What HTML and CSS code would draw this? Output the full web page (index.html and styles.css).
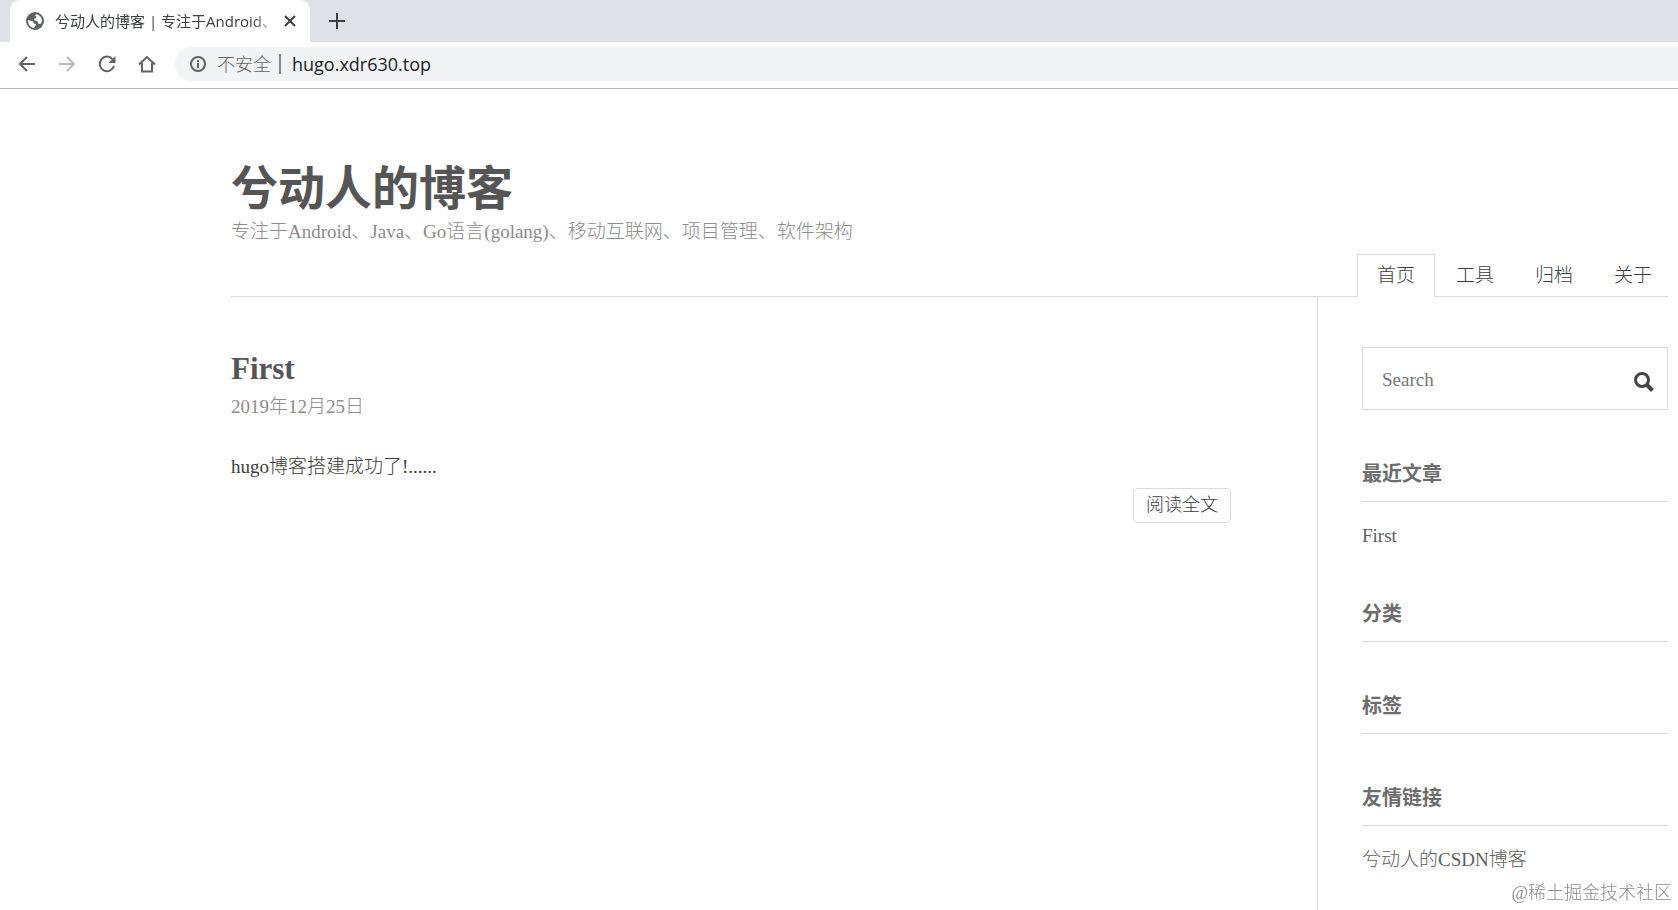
FILE: index.html
```html
<!DOCTYPE html>
<html lang="zh-CN">
<head>
    <meta charset="UTF-8">
    <meta name="viewport" content="width=device-width, initial-scale=1.0">
    <title>兮动人的博客 | 专注于Android、Java、Go语言</title>
    <link rel="stylesheet" href="styles.css">
</head>
<body>
    <div class="browser">
        <div class="tab-strip">
            <div class="tab">
                <svg class="globe" viewBox="0 0 18 18" width="18" height="18">
                    <circle cx="9" cy="9" r="9" fill="#5f6368"/>
                    <path d="M2 8l5 1.500 1 2 2 .5-.5 2L8 16C4.500 15.500 2 12.500 2 9zM10.500 2.200C14 3 16 5.500 16 9l-1.500 3-2.500-.5-.5-2.500-3-.5-.5-1.500 2-1 .5-1.500-1.500-1z" fill="#fff"/>
                </svg>
                <span class="tab-title">兮动人的博客 | 专注于Android、</span>
                <button class="tab-close" type="button" aria-label="关闭">
                    <svg viewBox="0 0 12 12" width="12" height="12"><path d="M1 1l10 10M11 1L1 11" stroke="#3c4043" stroke-width="2"/></svg>
                </button>
            </div>
            <button class="new-tab" type="button" aria-label="新标签页">
                <svg viewBox="0 0 16 16" width="16" height="16"><path d="M8 0v16M0 8h16" stroke="#3c4043" stroke-width="2"/></svg>
            </button>
        </div>
        <div class="toolbar">
            <button type="button" aria-label="后退">
                <svg viewBox="0 0 18 18" width="18" height="18" fill="none" stroke="#5f6368" stroke-width="2"><path d="M17 9H2M9 2L2 9l7 7"/></svg>
            </button>
            <button type="button" aria-label="前进" disabled>
                <svg viewBox="0 0 18 18" width="18" height="18" fill="none" stroke="#babcbe" stroke-width="2"><path d="M1 9h15M9 2l7 7-7 7"/></svg>
            </button>
            <button type="button" aria-label="刷新">
                <svg viewBox="0 0 18 18" width="18" height="18"><path d="M14.500 4A7.300 7.300 0 1 0 16 11" fill="none" stroke="#5f6368" stroke-width="2"/><path d="M17.500 1v7h-7z" fill="#5f6368"/></svg>
            </button>
            <button type="button" aria-label="主页">
                <svg viewBox="0 0 18 18" width="18" height="18" fill="none" stroke="#5f6368" stroke-width="2"><path d="M1 9.500L9 2l8 7.500M4 8v8.500h10V8"/></svg>
            </button>
            <div class="omnibox">
                <svg viewBox="0 0 18 18" width="18" height="18"><circle cx="9" cy="9" r="7" fill="none" stroke="#5f6368" stroke-width="2"/><path d="M9 8v5M9 5v2" stroke="#5f6368" stroke-width="2"/></svg>
                <label class="insecure" for="address">不安全</label>
                <input class="address" id="address" type="text" value="hugo.xdr630.top">
            </div>
        </div>
    </div>

    <div class="page">
        <header class="header">
            <h1 class="site-title">兮动人的博客</h1>
            <p class="description">专注于Android、Java、Go语言(golang)、移动互联网、项目管理、软件架构</p>
            <nav class="nav">
                <a class="current" href="#">首页</a>
                <a href="#">工具</a>
                <a href="#">归档</a>
                <a href="#">关于</a>
            </nav>
        </header>
        <div class="columns">
            <main class="main">
                <article class="post">
                    <h2 class="post-title"><a href="#">First</a></h2>
                    <p class="post-date">2019年12月25日</p>
                    <p class="post-content">hugo博客搭建成功了!......</p>
                    <p class="readmore"><a href="#">阅读全文</a></p>
                </article>
            </main>
            <aside class="sidebar">
                <form class="search">
                    <input type="text" name="q" aria-label="Search" placeholder="Search">
                    <button type="submit" aria-label="Search">
                        <svg viewBox="0 0 20 20" width="20" height="20" fill="none" stroke="#444"><circle cx="8" cy="8" r="6.500" stroke-width="3"/><path d="M12.500 12.500l6 6" stroke-width="4"/></svg>
                    </button>
                </form>
                <section class="widget">
                    <h3>最近文章</h3>
                    <ul>
                        <li><a href="#">First</a></li>
                    </ul>
                </section>
                <section class="widget">
                    <h3>分类</h3>
                </section>
                <section class="widget">
                    <h3>标签</h3>
                </section>
                <section class="widget">
                    <h3>友情链接</h3>
                    <ul>
                        <li><a href="#">兮动人的CSDN博客</a></li>
                    </ul>
                </section>
            </aside>
        </div>
    </div>
    <div class="watermark">@稀土掘金技术社区</div>
</body>
</html>
```
FILE: styles.css
```css
* {
    box-sizing: border-box;
}
body {
    margin: 0;
    min-height: 100vh;
    display: flex;
    flex-direction: column;
    background-color: #fff;
    color: #3c3c3c;
    font-family: Georgia, "Liberation Serif", "Noto Sans CJK SC", serif;
    font-size: 19px;
    font-weight: 300;
    line-height: 28px;
}
h1, h2, h3, p, ul {
    margin: 0;
    padding: 0;
}
ul {
    list-style: none;
}
a {
    color: inherit;
    text-decoration: none;
}
button {
    padding: 0;
    border: none;
    background: none;
    cursor: pointer;
}
svg {
    display: block;
}

/* browser bar */
.browser {
    font-family: "Open Sans", "Noto Sans CJK SC", sans-serif;
    font-weight: 400;
    border-bottom: 1px solid #b4b4b4;
}
.tab-strip {
    display: flex;
    align-items: center;
    height: 42px;
    padding-left: 10px;
    background-color: #dee1e6;
}
.tab {
    display: flex;
    align-items: center;
    width: 300px;
    height: 42px;
    padding: 0 14px 0 16px;
    border-radius: 10px 10px 0 0;
    background-color: #fff;
}
.tab-title {
    flex: 1;
    margin: 0 4px 0 11px;
    white-space: nowrap;
    font-size: 15px;
    color: #3c4043;
    -webkit-mask-image: linear-gradient(to right, #000 88%, transparent);
    mask-image: linear-gradient(to right, #000 88%, transparent);
}
.new-tab {
    margin-left: 19px;
}
.toolbar {
    display: flex;
    align-items: center;
    gap: 22px;
    height: 46px;
    padding: 0 0 2px 18px;
}
.omnibox {
    flex: 1;
    display: flex;
    align-items: center;
    height: 34px;
    margin-left: -3px;
    padding-left: 14px;
    border-radius: 17px 0 0 17px;
    background-color: #f1f3f4;
}
.insecure {
    margin-left: 10px;
    padding-right: 8px;
    border-right: 2px solid #85888b;
    font-size: 18px;
    font-weight: 300;
    line-height: 20px;
    color: #5f6368;
}
.address {
    flex: 1;
    padding: 0 11px;
    border: none;
    background: none;
    color: #202124;
    font-family: inherit;
    font-size: 18px;
}

/* blog */
.page {
    flex: 1;
    display: flex;
    flex-direction: column;
    padding: 72px 10px 0 231px;
}
.header {
    border-bottom: 1px solid #d8dadb;
}
.site-title {
    font-size: 47px;
    line-height: 57px;
    color: #555;
}
.description {
    color: #8c8c8c;
}
.nav {
    display: flex;
    justify-content: flex-end;
    gap: 1px;
    margin: 8px -4px -1px 0;
}
.nav a {
    padding: 7px 19px;
    border: 1px solid transparent;
    border-bottom: none;
}
.nav .current {
    border-color: #d8dadb;
    background-color: #fff;
}
.columns {
    flex: 1;
    display: flex;
}
.main {
    flex: 1;
    padding: 52px 86px 0 0;
}
.post-title {
    font-size: 31px;
    line-height: 40px;
    color: #555;
}
.post-date {
    margin-top: 4px;
    color: #8c8c8c;
}
.post-content {
    margin-top: 32px;
}
.readmore {
    display: flex;
    justify-content: flex-end;
    margin-top: 7px;
}
.readmore a {
    padding: 2px 12px 3px;
    border: 1px solid #d8dadb;
    border-radius: 5px;
    font-size: 18px;
}
.sidebar {
    width: 351px;
    padding: 50px 0 0 44px;
    border-left: 1px solid #d8dadb;
    color: #606060;
}
.search {
    display: flex;
    align-items: center;
    height: 63px;
    padding: 2px 13px 0 19px;
    border: 1px solid #d8dadb;
}
.search input {
    flex: 1;
    min-width: 0;
    padding: 0;
    border: none;
    font: inherit;
}
.search input::placeholder {
    color: #777;
}
.search button {
    margin-top: 4px;
}
.widget {
    margin-top: 49px;
}
.widget h3 {
    padding-bottom: 12px;
    border-bottom: 1px solid #d8dadb;
    font-size: 20px;
    line-height: 30px;
    color: #6c6c6c;
}
.widget li {
    padding-top: 20px;
}

.watermark {
    position: fixed;
    right: 6px;
    bottom: 3px;
    font-size: 18px;
    color: #8c8c8c;
}
```
